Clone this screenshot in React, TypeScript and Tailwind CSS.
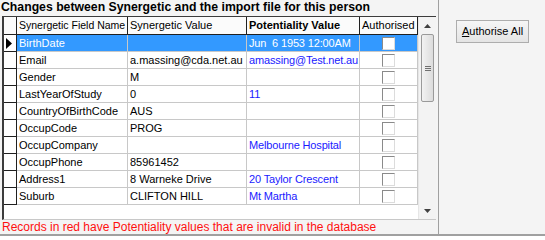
import React from "react";

type Row = {
  field: string;
  syn: string;
  pot: string;
};

const rows: Row[] = [
  { field: "BirthDate", syn: "", pot: "Jun  6 1953 12:00AM" },
  { field: "Email", syn: "a.massing@cda.net.au", pot: "amassing@Test.net.au" },
  { field: "Gender", syn: "M", pot: "" },
  { field: "LastYearOfStudy", syn: "0", pot: "11" },
  { field: "CountryOfBirthCode", syn: "AUS", pot: "" },
  { field: "OccupCode", syn: "PROG", pot: "" },
  { field: "OccupCompany", syn: "", pot: "Melbourne Hospital" },
  { field: "OccupPhone", syn: "85961452", pot: "" },
  { field: "Address1", syn: "8 Warneke Drive", pot: "20 Taylor Crescent" },
  { field: "Suburb", syn: "CLIFTON HILL", pot: "Mt Martha" },
];

const cols = "grid-cols-[13px_111px_119px_113px_58px]";

const CheckBox = () => (
  <div className="h-[13px] w-[13px] border border-t-[#8a8a8a] border-l-[#8a8a8a] border-r-[#dcdcdc] border-b-[#dcdcdc] bg-white" />
);

const ScrollBar = () => (
  <div className="flex w-[18px] flex-col bg-[#f3f3f3] border-l border-[#e6e6e6]">
    <div className="flex h-[17px] items-center justify-center">
      <svg width="7" height="4" viewBox="0 0 7 4">
        <path d="M3.5 0 L7 4 L0 4 Z" fill="#404040" />
      </svg>
    </div>
    <div className="mx-[2px] flex h-[68px] items-center justify-center rounded-[2px] border border-[#9a9a9a] bg-gradient-to-r from-[#f2f2f2] to-[#dcdcdc]">
      <div className="flex flex-col gap-[1px]">
        <div className="h-px w-[6px] bg-[#707070]" />
        <div className="h-px w-[6px] bg-[#707070]" />
        <div className="h-px w-[6px] bg-[#707070]" />
      </div>
    </div>
    <div className="flex-1" />
    <div className="flex h-[17px] items-center justify-center">
      <svg width="7" height="4" viewBox="0 0 7 4">
        <path d="M0 0 L7 0 L3.5 4 Z" fill="#404040" />
      </svg>
    </div>
  </div>
);

const cell = "overflow-hidden whitespace-pre pl-[2px] leading-[16px]";

export default function App() {
  return (
    <div
      className="flex h-[236px] w-[545px] flex-col bg-[#f4f4f4] text-[11px] text-black"
      style={{ fontFamily: '"Liberation Sans", Arial, sans-serif' }}
    >
      <div className="flex flex-1">
        {/* left panel */}
        <div className="flex w-[439px] flex-col border-r border-[#a0a0a0]">
          <div className="h-[16px] whitespace-nowrap pl-[1px] text-[12.25px] font-bold leading-[14px]">
            Changes between Synergetic and the import file for this person
          </div>

          {/* grid */}
          <div className="ml-[2px] flex h-[204px] w-[434px] border-t border-l-2 border-b border-[#3c3c3c] border-b-[#c8c8c8] bg-white">
            <div className="flex flex-col">
              {/* header */}
              <div className={`grid ${cols} h-[18px] border-b border-[#202020] bg-[#fbfbfb]`}>
                <div className="border-r border-[#202020]" />
                <div className="overflow-hidden whitespace-nowrap border-r border-[#202020] pl-[2px] text-[10.5px] leading-[17px]">Synergetic Field Name</div>
                <div className="border-r border-[#202020] pl-[2px] leading-[17px]">Synergetic Value</div>
                <div className="border-r border-[#202020] pl-[2px] font-bold leading-[17px]">Potentiality Value</div>
                <div className="border-r border-[#202020] pl-[2px] leading-[17px]">Authorised</div>
              </div>
              {rows.map((r, i) => {
                const sel = i === 0;
                return (
                  <div key={r.field} className={`grid ${cols} h-[17px]`}>
                    <div className="flex items-center border-r border-b border-[#202020] bg-white pl-[2px]">
                      {sel && (
                        <svg width="6" height="11" viewBox="0 0 6 11">
                          <path d="M0 0 L6 5.5 L0 11 Z" fill="#000" />
                        </svg>
                      )}
                    </div>
                    <div className={`${cell} border-r border-b border-[#c8c8c8] ${sel ? "bg-[#3399ff] text-white" : ""}`}>
                      {r.field}
                    </div>
                    <div className={`${cell} border-r border-b border-[#c8c8c8] ${sel ? "bg-[#3399ff] text-white" : ""}`}>
                      {r.syn}
                    </div>
                    <div className={`${cell} border-r border-b border-[#c8c8c8] tracking-[-0.15px] ${sel ? "bg-[#3399ff] text-white" : "text-[#1a1aff]"}`}>
                      {r.pot}
                    </div>
                    <div
                      className={`flex items-center justify-center border-r border-b border-[#c8c8c8] ${sel ? "bg-[#3399ff]" : ""}`}
                    >
                      <CheckBox />
                    </div>
                  </div>
                );
              })}
            </div>
            <ScrollBar />
          </div>

          <div className="whitespace-nowrap pl-[2px] pt-[1px] text-[12px] leading-[13px] text-[#ff1010]">
            Records in red have Potentiality values that are invalid in the database
          </div>
        </div>

        {/* right panel */}
        <div className="flex-1 pl-[17px] pt-[20px]">
          <button className="h-[23px] w-[73px] border border-[#adadad] bg-gradient-to-b from-[#f6f6f6] to-[#e4e4e4] text-[11px] leading-[21px]">
            <span className="underline">A</span>uthorise All
          </button>
        </div>
      </div>
      <div className="h-[3px] bg-[#a0a0a0]" />
    </div>
  );
}
